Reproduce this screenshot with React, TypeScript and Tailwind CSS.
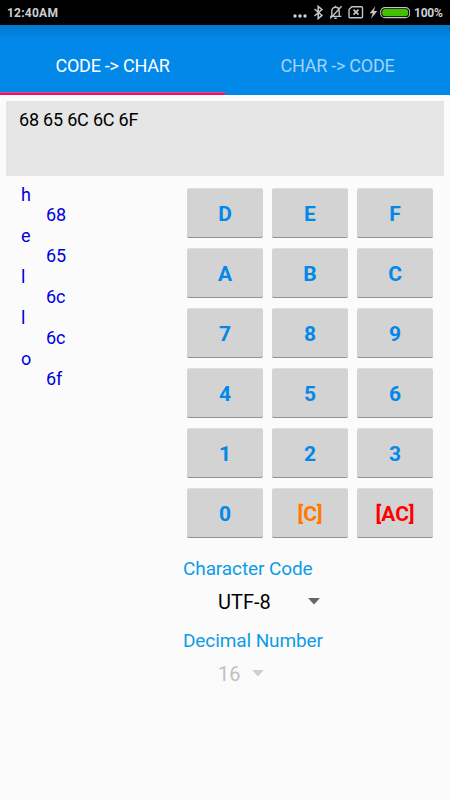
const keys = ['D', 'E', 'F', 'A', 'B', 'C', '7', '8', '9', '4', '5', '6', '1', '2', '3', '0', '[C]', '[AC]'];

const decoded = [
  ['h', '68'],
  ['e', '65'],
  ['l', '6c'],
  ['l', '6c'],
  ['o', '6f'],
];

function keyColor(key: string) {
  if (key === '[C]') return 'text-[#ff7800]';
  if (key === '[AC]') return 'text-[#ff0000]';
  return 'text-[#0288e9]';
}

function StatusBar() {
  return (
    <header className="flex h-[25px] items-center justify-between bg-black px-[7px] text-[12px] font-bold leading-[25px] text-[#cfcfcf]">
      <span className="w-[51px] whitespace-nowrap pt-px tracking-[0.02em]">12:40AM</span>
      <svg width="120" height="25" viewBox="290 0 120 25" className="ml-auto shrink-0" fill="none" stroke="#c4c4c4">
        <g fill="#d0d0d0" stroke="none">
          <circle cx="295" cy="16" r="1.7" />
          <circle cx="300" cy="16" r="1.7" />
          <circle cx="305" cy="16" r="1.7" />
        </g>
        <path d="M314.5 9l7.4 6.5-3.7 3.1V6.4l3.7 3.1-7.4 6.5" strokeWidth="1.6" />
        <path d="M330.2 16.4h11.2M331.8 15.8v-5c0-2 1.5-3.6 3.7-3.6s3.7 1.6 3.7 3.6v5M335.5 5.7v1.5M334.2 18.2h2.6M341.6 6.2l-11.4 12.4" strokeWidth="1.4" />
        <path d="M351.8 6.8h9.8q.9 0 .9.9v9.1q0 .9-.9.9h-11.7q-.9 0-.9-.9V9.6z" strokeWidth="1.4" />
        <path d="M353.5 9.7l5 5M358.5 9.7l-5 5" strokeWidth="1.7" />
        <path d="M375.4 6.3l-5.8 6.9h3.1l-1.7 5.5 6.3-7.6h-3.4z" fill="#c4c4c4" stroke="none" />
        <rect x="380.7" y="7.6" width="29" height="10" rx="4.2" strokeWidth="1.1" />
        <rect x="382.2" y="9" width="26" height="7.2" rx="3" fill="#43c000" stroke="none" />
      </svg>
      <span className="ml-[4px] w-[29px] whitespace-nowrap pt-px tracking-[-0.02em]">100%</span>
    </header>
  );
}

function Caret({ color }: { color: string }) {
  return (
    <svg width="12" height="7" viewBox="0 0 12 7" fill={color} className="-mt-[1px]">
      <path d="M0 0h12L6 6.5z" />
    </svg>
  );
}

export default function App() {
  return (
    <div className="h-[800px] w-[450px] overflow-hidden bg-[#fbfbfb] font-['Roboto',sans-serif] font-normal">
      <StatusBar />
      <nav className="grid h-[70px] grid-cols-2 bg-[#0288e9] bg-linear-to-b from-[#0278cc] via-[#0288e9] via-20% to-[#0288e9] text-[18px] tracking-[-0.25px] text-white">
        <button className="flex flex-col">
          <span className="flex h-[67px] w-full items-center justify-center pt-[14px]">CODE -&gt; CHAR</span>
          <span className="h-px w-full bg-[#c0559d]" />
          <span className="h-[2px] w-full bg-[#fb0a62]" />
        </button>
        <button className="flex items-center justify-center pb-[3px] pt-[14px] text-[#a3d2f7]">
          <span>CHAR -&gt; CODE</span>
        </button>
      </nav>
      <div className="mx-[6px] mt-[6px] h-[75px] bg-[#e6e6e6] px-[13px] pt-[8px] text-[18px] leading-[22px] tracking-[-0.2px] text-black">
        68 65 6C 6C 6F
      </div>
      <main className="flex">
        <dl className="w-[182px] shrink-0 pl-[21px] pt-[8px] text-[18px] tracking-[-0.15px] text-[#0000dc]">
          {decoded.map(([char, code], i) => (
            <div key={i}>
              <dt className="h-[21px] leading-[21px]">{char}</dt>
              <dd className="h-[20px] pl-[25px] leading-[20px]">{code}</dd>
            </div>
          ))}
        </dl>
        <section className="w-[252px] pt-[12px]">
          <div className="grid grid-cols-[76px_76px_76px] gap-x-[9px] gap-y-[10px] pl-[5px]">
            {keys.map((key) => (
              <button
                key={key}
                className={`h-[50px] rounded-[2px] border-b border-t border-b-[#929292] border-t-[#dedede] bg-[#d3d3d3] pt-[3px] text-[21px] font-bold ${keyColor(key)}`}
              >
                {key}
              </button>
            ))}
          </div>
          <h2 className="mt-[19px] pl-px text-[19px] leading-[24px] tracking-[-0.1px] text-[#0e9ce5]">Character Code</h2>
          <div className="mt-[8px] flex h-[26px] items-center pl-[36px] text-[20px] text-black">
            <span className="w-[90px]">UTF-8</span>
            <Caret color="#666666" />
          </div>
          <h2 className="mt-[14px] pl-px text-[19px] leading-[24px] tracking-[-0.1px] text-[#0e9ce5]">Decimal Number</h2>
          <div className="mt-[8px] flex h-[26px] items-center pl-[36px] text-[20px] text-[#c0c0c0]">
            <span className="w-[34px]">16</span>
            <Caret color="#d0d0d0" />
          </div>
        </section>
      </main>
    </div>
  );
}
